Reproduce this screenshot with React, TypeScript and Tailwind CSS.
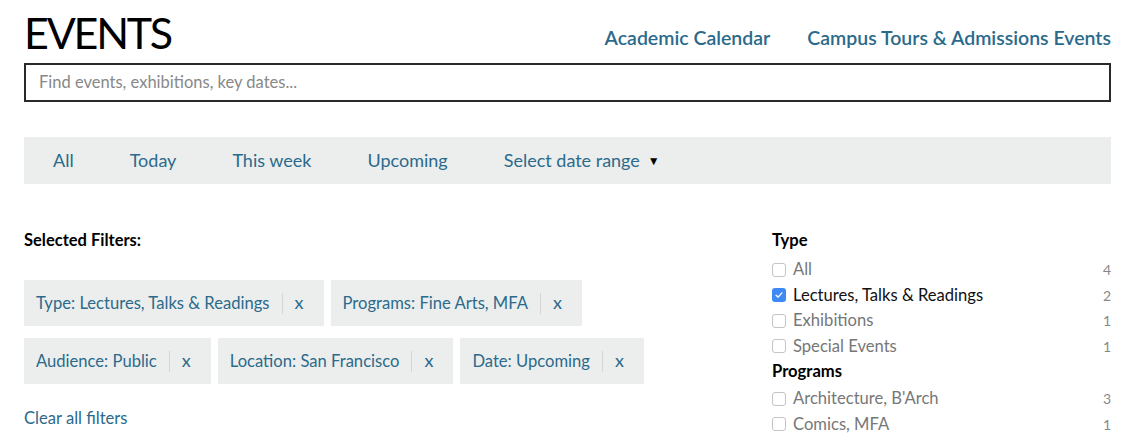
const font = { fontFamily: 'Lato, "Open Sans", sans-serif' };

const filters = [
  ['Type: Lectures, Talks & Readings', 'Programs: Fine Arts, MFA'],
  ['Audience: Public', 'Location: San Francisco', 'Date: Upcoming'],
];

const typeOptions = [
  { label: 'All', count: 4, checked: false },
  { label: 'Lectures, Talks & Readings', count: 2, checked: true },
  { label: 'Exhibitions', count: 1, checked: false },
  { label: 'Special Events', count: 1, checked: false },
];

const programOptions = [
  { label: "Architecture, B'Arch", count: 3, checked: false },
  { label: 'Comics, MFA', count: 1, checked: false },
];

function Checkbox({ checked }: { checked: boolean }) {
  if (checked) {
    return (
      <span className="w-[14px] h-[14px] rounded-[3px] bg-[#3d8af7] flex items-center justify-center shrink-0">
        <svg viewBox="0 0 12 12" className="w-[10px] h-[10px]">
          <path d="M2.5 6.2 L5 8.6 L9.5 3.4" fill="none" stroke="white" strokeWidth="1.6" strokeLinecap="round" strokeLinejoin="round" />
        </svg>
      </span>
    );
  }
  return <span className="w-[14px] h-[14px] rounded-[3px] border border-[#c4c4c4] bg-white shrink-0" />;
}

function OptionRow({ label, count, checked }: { label: string; count: number; checked: boolean }) {
  return (
    <div className="flex items-center h-[25.5px]">
      <Checkbox checked={checked} />
      <span className={`ml-[7px] text-[16.6px] ${checked ? 'text-[#111]' : 'text-[#777]'}`}>{label}</span>
      <span className="ml-auto text-[14px] text-[#888]">{count}</span>
    </div>
  );
}

export default function App() {
  return (
    <div className="bg-white w-[1130px] h-[439px] overflow-hidden pl-[24px] pr-[19px]" style={font}>
      {/* Header */}
      <div className="flex items-end justify-between pt-[6px] h-[56px]">
        <h1 className="text-[43px] leading-[46px] font-normal text-black tracking-[-2.2px]">EVENTS</h1>
        <div className="flex gap-[37px] pb-[4px]">
          <a className="text-[19.5px] text-[#2b6a8b] font-semibold">Academic Calendar</a>
          <a className="text-[19.5px] text-[#2b6a8b] font-semibold">Campus Tours &amp; Admissions Events</a>
        </div>
      </div>

      {/* Search */}
      <div className="mt-[7px] h-[39px] border-2 border-[#2a2a2a] flex items-center px-[13px]">
        <span className="text-[16.5px] text-[#888]">Find events, exhibitions, key dates...</span>
      </div>

      {/* Date bar */}
      <div className="mt-[35px] h-[47px] bg-[#eceeee] flex items-center pl-[29px] gap-[56px] text-[18px] text-[#2b6a8b]">
        <span>All</span>
        <span>Today</span>
        <span>This week</span>
        <span>Upcoming</span>
        <span className="flex items-center">
          Select date range
          <span className="ml-[8px] text-[12px] text-black">▼</span>
        </span>
      </div>

      {/* Filters */}
      <div className="flex mt-[46px]">
        <div className="flex-1">
          <div className="text-[16.5px] font-bold text-black h-[20px] leading-[20px]">Selected Filters:</div>
          <div className="mt-[30px] flex flex-col gap-[12px]">
            {filters.map((row, i) => (
              <div key={i} className="flex gap-[7px]">
                {row.map((f) => (
                  <div key={f} className="h-[46px] bg-[#eceeee] flex items-center pl-[12px] pr-[20px] text-[16.6px] text-[#2b6a8b]">
                    <span>{f}</span>
                    <span className="w-px h-[21px] bg-[#d6d6d6] mx-[12px]" />
                    <span className="text-[18px] leading-none pb-[2px]">x</span>
                  </div>
                ))}
              </div>
            ))}
          </div>
          <div className="mt-[22px] text-[16.6px] text-[#2b6a8b]">Clear all filters</div>
        </div>

        <div className="w-[339px]">
          <div className="text-[16.6px] font-bold text-black h-[20px] leading-[20px]">Type</div>
          <div className="mt-[7px]">
            {typeOptions.map((o) => (
              <OptionRow key={o.label} {...o} />
            ))}
          </div>
          <div className="text-[16.6px] font-bold text-black h-[24px] leading-[24px]">Programs</div>
          <div className="mt-[3px]">
            {programOptions.map((o) => (
              <OptionRow key={o.label} {...o} />
            ))}
          </div>
        </div>
      </div>
    </div>
  );
}
